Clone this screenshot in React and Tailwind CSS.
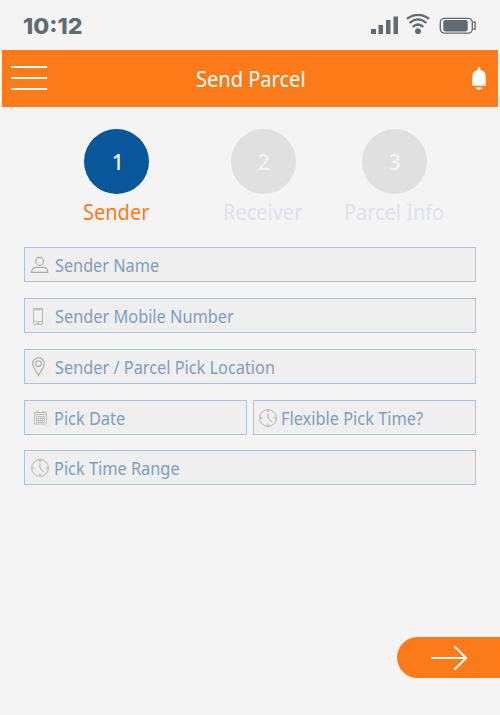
import { useLayoutEffect, useRef, useState } from 'react';

// Single line of text condensed or widened to a given width.
function FitText({ width, className = '', children }) {
  const ref = useRef(null);
  const [scale, setScale] = useState(1);
  useLayoutEffect(() => {
    const measure = () => setScale(width / ref.current.offsetWidth);
    measure();
    document.fonts?.ready.then(() => ref.current && measure());
  }, [width]);
  return (
    <span className="block shrink-0" style={{ width }}>
      <span
        ref={ref}
        className={`inline-block origin-left whitespace-nowrap align-top ${className}`}
        style={{ transform: `scaleX(${scale})` }}
      >
        {children}
      </span>
    </span>
  );
}

function StatusBar() {
  return (
    <div className="flex h-[50px] items-start pl-[23px] pr-6 text-[#5f6b70]">
      <div className="pt-[14px]">
        <FitText width={59} className="font-['Inter'] text-[22px] leading-6 font-extrabold">10:12</FitText>
      </div>
      <div className="ml-auto flex pt-[14px]">
        <svg width="27" height="20" viewBox="0 0 27 20" fill="currentColor">
          <path d="M0 15h5v5H0zM7.5 11h4.5v9H7.5zM15 6h4.5v14H15zM22.5 2.5h5v17.5h-5z" />
        </svg>
        <svg className="ml-2" width="24" height="20" viewBox="0 0 24 20" fill="none" stroke="currentColor" strokeWidth="2.3">
          <path d="M1 4.8Q12-3.2 23 4.8M3.6 9Q12 1.8 20.4 9M6.7 12.8Q12 8.2 17.3 12.8" />
          <circle cx="12" cy="17.2" r="2.9" fill="currentColor" stroke="none" />
        </svg>
        <svg className="ml-[9px]" width="37" height="20" viewBox="0 0 37 20" fill="none" stroke="currentColor" strokeWidth="1.3">
          <rect x="1.3" y="4.3" width="32" height="14.8" rx="4" />
          <rect x="4.3" y="6" width="24.4" height="11.4" rx="2.2" fill="currentColor" stroke="none" />
          <path d="M33.5 8.2h2.6v7h-2.6" />
        </svg>
      </div>
    </div>
  );
}

function Header() {
  return (
    <header className="mx-0.5 flex h-[57px] items-center justify-between bg-[#fc7a18] text-white">
      <button aria-label="Menu" className="mb-[2px] ml-[9px] flex w-[86px] flex-col gap-[9px]">
        <span className="h-0.5 w-9 bg-white" />
        <span className="h-0.5 w-9 bg-white" />
        <span className="h-0.5 w-9 bg-white" />
      </button>
      <h1 className="pt-px pl-px">
        <FitText width={110} className="text-[21.5px] leading-7">Send Parcel</FitText>
      </h1>
      <div className="mr-3 flex w-[83px] justify-end">
        <svg width="14" height="24" viewBox="0 0 14 24" fill="white">
          <path d="M5.7 3V1.6a1.3 1.3 0 0 1 2.6 0V3C12.2 3.8 13.7 6.5 13.7 9.5V17l.3 1v.8H0V18l.3-1V9.5C.3 6.5 1.8 3.8 5.7 3Z" />
          <path d="M3.8 20.6h6.4c-.4 1.4-1.5 2.1-3.2 2.1s-2.8-.7-3.2-2.1Z" />
        </svg>
      </div>
    </header>
  );
}

function Step({ number, label, width, active }) {
  return (
    <div className="flex flex-col items-center">
      <div className={`flex size-[65px] items-center justify-center rounded-full ${active ? 'bg-[#08579a] pl-[3px] text-white' : 'bg-[#e0e0e0] pl-px text-[#f4f4f4]'}`}>
        <FitText width={12} className="text-[22px] leading-[27px] font-medium">{number}</FitText>
      </div>
      <div className={`mt-1 pr-px ${active ? 'text-[#fc7a18]' : 'text-[#dfe1ee]'}`}>
        <FitText width={width} className="text-[21.5px] leading-7">{label}</FitText>
      </div>
    </div>
  );
}

function UserIcon() {
  return (
    <svg width="18" height="18" viewBox="0 0 18 18" fill="none" stroke="#aaa" strokeWidth="1.1">
      <circle cx="8.7" cy="5.4" r="4" />
      <path d="M.6 16.4c0-3.3 1.8-5 5-5h6.2c3.2 0 5 1.7 5 5Z" />
    </svg>
  );
}

function PhoneIcon() {
  return (
    <svg className="mt-px" width="10" height="17" viewBox="0 0 10 17" fill="none" stroke="#b9b9b9">
      <rect x=".5" y=".5" width="9" height="16" rx=".4" />
      <path d="M.5 1.7h9M.5 13.7h9M3.5 1.2h3" />
      <path d="M5 14v2" strokeWidth="1.6" />
    </svg>
  );
}

function PinIcon() {
  return (
    <svg width="13" height="20" viewBox="0 0 13 20" fill="none" stroke="#a8a8a8" strokeWidth="1.1">
      <path d="M6.5 18.4C4.8 14.8.7 10.4.7 6.6a5.8 5.8 0 0 1 11.6 0c0 3.8-4.1 8.2-5.8 11.8Z" />
      <circle cx="6.5" cy="6.6" r="2.8" />
    </svg>
  );
}

function CalendarIcon() {
  return (
    <svg width="13" height="15" viewBox="0 0 13 15" fill="none" stroke="#bdbdbd" strokeWidth="1">
      <path d="M.5 2.5h12v11.5H.5zM.5 4.5h12" />
      <path d="M3 .8v2M10 .8v2" strokeWidth="1.4" />
      <path d="M2.5 6.5h8v6h-8zM2.5 8.5h8M2.5 10.5h8M4.5 6.5v6M6.5 6.5v6M8.5 6.5v6" strokeWidth=".8" />
    </svg>
  );
}

function ClockIcon() {
  return (
    <svg width="18" height="18" viewBox="0 0 18 18" fill="none" stroke="#adadad">
      <circle cx="9" cy="9" r="8.4" strokeWidth=".9" />
      <path d="M9 1v2.4M9 14.6V17M1 9h2.4M14.6 9H17" strokeWidth="1" />
      <path d="M8.9 4.5V9l4.1 4.3" strokeWidth="1" />
    </svg>
  );
}

function Field({ icon, label, width, iconBox = 'w-[30px] pl-1.5' }) {
  return (
    <div className="flex h-[35px] min-w-0 flex-1 items-center border border-[#a9c5de] bg-[#efefef] text-[#819dc2]">
      <div className={`flex shrink-0 ${iconBox}`}>{icon}</div>
      <FitText width={width} className="text-[17.5px] leading-6">{label}</FitText>
    </div>
  );
}

export default function App() {
  return (
    <main className="flex h-[715px] w-[500px] flex-col overflow-hidden bg-[#f4f4f4] font-['Noto_Sans',sans-serif]">
      <StatusBar />
      <Header />
      <div className="mt-[22px] flex pl-[83px]">
        <Step number="1" label="Sender" width={66} active />
        <div className="ml-[73px]"><Step number="2" label="Receiver" width={79} /></div>
        <div className="ml-[41px]"><Step number="3" label="Parcel Info" width={100} /></div>
      </div>
      <form className="mx-6 mt-[21px] flex flex-col">
        <div className="flex"><Field icon={<UserIcon />} label="Sender Name" width={104} /></div>
        <div className="mt-4 flex"><Field icon={<PhoneIcon />} label="Sender Mobile Number" width={179} iconBox="w-[30px] pl-2" /></div>
        <div className="mt-4 flex"><Field icon={<PinIcon />} label="Sender / Parcel Pick Location" width={220} iconBox="w-[30px] pl-[7px]" /></div>
        <div className="mt-4 flex gap-1.5">
          <Field icon={<CalendarIcon />} label="Pick Date" width={71} iconBox="w-[29px] pl-[9px]" />
          <Field icon={<ClockIcon />} label="Flexible Pick Time?" width={142} iconBox="w-[27px] pl-[5px]" />
        </div>
        <div className="mt-[15px] flex"><Field icon={<ClockIcon />} label="Pick Time Range" width={126} iconBox="w-[29px] pl-1.5" /></div>
      </form>
      <button aria-label="Next" className="mt-auto mb-[37px] flex h-[41px] w-[103px] items-center self-end rounded-l-full bg-[#fc7a18] pl-[34px]">
        <svg width="37" height="26" viewBox="0 0 37 26" fill="none" stroke="white" strokeWidth="2">
          <path d="M0 13h35.3M23.5 1.5 35.1 13 23.5 24.5" />
        </svg>
      </button>
    </main>
  );
}
